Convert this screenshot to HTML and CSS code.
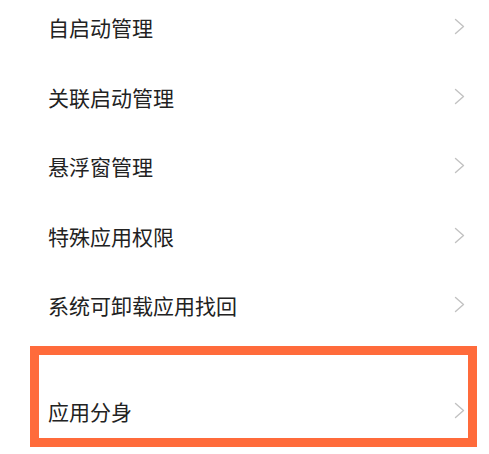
FILE: index.html
```html
<!DOCTYPE html>
<html lang="zh-CN">
<head>
<meta charset="utf-8">
<link rel="stylesheet" href="styles.css">
</head>
<body>
<div class="list">
  <div class="row"><span class="label">自启动管理</span><svg class="chev" width="11" height="17" viewBox="0 0 11 17"><polyline points="1.5,1.5 9.5,8.5 1.5,15.5"/></svg></div>
  <div class="row"><span class="label">关联启动管理</span><svg class="chev" width="11" height="17" viewBox="0 0 11 17"><polyline points="1.5,1.5 9.5,8.5 1.5,15.5"/></svg></div>
  <div class="row"><span class="label">悬浮窗管理</span><svg class="chev" width="11" height="17" viewBox="0 0 11 17"><polyline points="1.5,1.5 9.5,8.5 1.5,15.5"/></svg></div>
  <div class="row"><span class="label">特殊应用权限</span><svg class="chev" width="11" height="17" viewBox="0 0 11 17"><polyline points="1.5,1.5 9.5,8.5 1.5,15.5"/></svg></div>
  <div class="row"><span class="label">系统可卸载应用找回</span><svg class="chev" width="11" height="17" viewBox="0 0 11 17"><polyline points="1.5,1.5 9.5,8.5 1.5,15.5"/></svg></div>
</div>
<div class="list section">
  <div class="row"><span class="label">应用分身</span><svg class="chev" width="11" height="17" viewBox="0 0 11 17"><polyline points="1.5,1.5 9.5,8.5 1.5,15.5"/></svg></div>
  <div class="highlight"></div>
</div>
</body>
</html>
```

FILE: styles.css
```css
html, body {
  margin: 0;
  padding: 0;
  background: #ffffff;
}
body {
  width: 489px;
  height: 454px;
  overflow: hidden;
  font-family: "Noto Sans CJK SC", "Noto Sans", sans-serif;
}
.list {
  display: flex;
  flex-direction: column;
  margin-top: -7px;
}
.section {
  position: relative;
  margin-top: 36px;
}
.row {
  height: 69.5px;
  display: flex;
  align-items: center;
  justify-content: space-between;
  padding: 0 24px 0 48px;
  box-sizing: border-box;
}
.label {
  font-size: 21px;
  color: #222222;
  line-height: 1;
}
.chev {
  display: block;
  margin-top: -2px;
}
.chev polyline {
  fill: none;
  stroke: #c2c2c2;
  stroke-width: 1.4;
  stroke-linecap: round;
  stroke-linejoin: round;
}
.highlight {
  position: absolute;
  left: 30px;
  top: -31px;
  width: 447px;
  height: 101px;
  box-sizing: border-box;
  border: 9px solid #ff6b3b;
  pointer-events: none;
}
```
